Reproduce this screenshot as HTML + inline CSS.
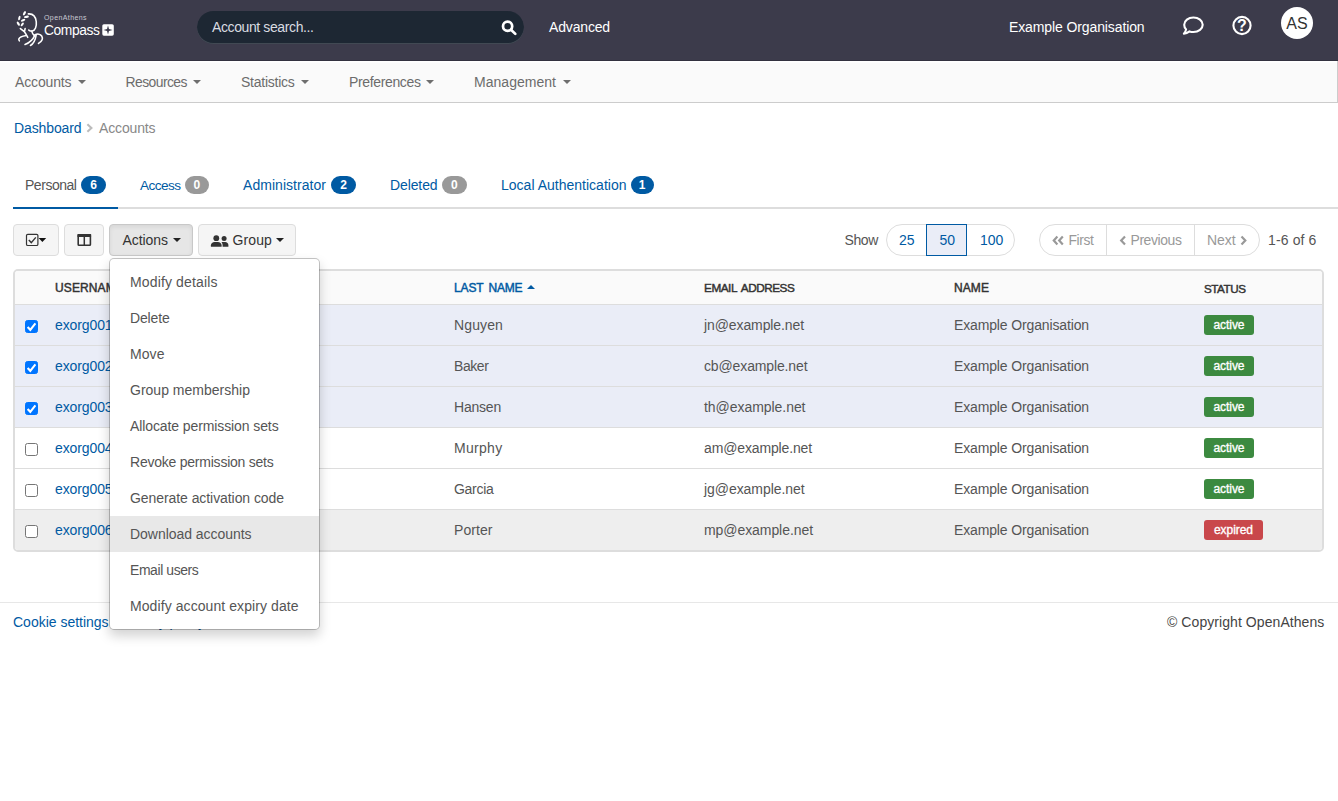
<!DOCTYPE html>
<html lang="en">
<head>
<meta charset="utf-8">
<title>Accounts - OpenAthens Compass</title>
<style>
*{box-sizing:border-box;margin:0;padding:0}
html,body{width:1338px;height:801px;overflow:hidden;background:#fff}
body{font-family:"Liberation Sans",sans-serif;font-size:14px;color:#555;position:relative}
a{color:#005aa3;text-decoration:none}
.abs{position:absolute;white-space:nowrap}
svg{display:block}

/* top header */
#hdr{position:absolute;left:0;top:0;width:1338px;height:61px;background:#3c3b4b;border-bottom:1px solid #32313f}
#search{position:absolute;left:197px;top:11px;width:327px;height:33px;border-radius:16.5px;background:#1d2733;box-shadow:inset 0 -1px 0 rgba(255,255,255,.16)}
#search span.ph{position:absolute;left:15px;top:8px;color:#d9dce1;font-size:14px;line-height:16px;white-space:nowrap}
.hw{color:#fff;font-size:14px;line-height:20px}
#avatar{position:absolute;left:1281px;top:7px;width:32px;height:32px;border-radius:50%;background:#fff;color:#333;text-align:center;font-size:16px;line-height:33px}

/* nav */
#nav{position:absolute;left:0;top:61px;width:1338px;height:42px;background:#fafafa;border-bottom:1px solid #ccc;border-right:1px solid #ccc;box-shadow:inset 0 1px 0 #fff,inset 0 2px 0 rgba(255,255,255,.6)}
.nv{position:absolute;top:11px;color:#6c6c6c;font-size:14px;line-height:20px;white-space:nowrap}
.caret{position:absolute;width:0;height:0;border-left:4px solid transparent;border-right:4px solid transparent;border-top:4.5px solid #6e6e6e}

/* tabs */
#tabline{position:absolute;left:13px;top:207px;width:1325px;height:2px;background:#ddd}
#tabactive{position:absolute;left:13px;top:207px;width:105px;height:2px;background:#005aa3}
.tab{position:absolute;top:175px;font-size:14px;line-height:20px;white-space:nowrap}
.bdg{position:absolute;top:176px;height:18px;border-radius:9px;font-size:12px;font-weight:bold;line-height:19px;color:#fff;text-align:center}
.bdg.b{background:#005aa3}.bdg.g{background:#999}

/* buttons */
.btn{position:absolute;top:224px;height:32px;border:1px solid #ddd;border-radius:4px;background:#f5f5f5;color:#333;font-size:14px;line-height:30px;white-space:nowrap}
.btn.on{background:#e6e6e6;border-color:#c8c8c8;box-shadow:inset 0 2px 4px rgba(0,0,0,.07)}
.btn .x{position:absolute;top:0}
.btn .caret{border-top-color:#222;top:13px}
.lbl{position:absolute;font-size:14px;line-height:20px;white-space:nowrap;color:#555}

/* pager pills */
.pill{position:absolute;top:224px;height:32px;border:1px solid #ddd;border-radius:16px;background:#fff}
.pill .c{position:absolute;top:-1px;height:32px;font-size:14px;line-height:32px;white-space:nowrap}
.pill .x{position:absolute;top:-1px;line-height:32px}
.pill .sep{position:absolute;top:0;width:1px;height:30px;background:#ddd}

/* table */
#tbl{position:absolute;left:13px;top:269px;width:1311px;height:283px;border:2px solid #ddd;border-radius:5px;background:#fff;overflow:hidden}
.row{position:absolute;left:0;width:1307px;height:41px;border-bottom:1px solid #ddd;background:#fff}
.row.sel{background:#eaedf7}
.row.hov{background:#eee;border-bottom:0;height:40px}
.row.head{height:34px;background:#fafafa;top:0}
.th{position:absolute;top:8px;font-size:12px;line-height:18px;font-weight:normal;-webkit-text-stroke:.45px;color:#333;white-space:nowrap}
.td{position:absolute;top:10px;font-size:14px;line-height:20px;color:#555;white-space:nowrap}
.cb{position:absolute;left:10px;top:15px;width:13px;height:13px;border:1px solid #767676;border-radius:2.5px;background:#fff}
.cb.on{background:#0075ff;border-color:#0075ff}
.cb.on svg{position:absolute;left:-1px;top:-1px}
.st{position:absolute;left:1189px;top:10px;height:20px;border-radius:3px;color:#fff;font-size:12px;font-weight:normal;-webkit-text-stroke:.35px;line-height:21px;white-space:nowrap;text-align:center}
.st.a{background:#3c8a40;width:50px}.st.e{background:#c9474b;width:59px}

/* dropdown */
#menu{position:absolute;left:109px;top:258px;width:211px;height:372px;background:#fff;background-clip:padding-box;border:1px solid rgba(0,0,0,.22);border-radius:5px;box-shadow:0 6px 12px rgba(0,0,0,.175);padding:5px 0}
#menu div{height:36px;line-height:36px;padding-left:20px;font-size:14px;color:#555;white-space:nowrap}
#menu div.hi{background:#e8e8e8}

/* footer */
#fline{position:absolute;left:0;top:602px;width:1338px;height:1px;background:#e7e7e7}
</style>
</head>
<body>
<div id="hdr">
  <svg class="abs" style="left:12px;top:8px" width="40" height="42" viewBox="0 0 763 801" fill="none" stroke="#fff" stroke-width="30" stroke-linecap="round" stroke-linejoin="round">
    <path d="M312 112 C400 105 452 170 463 262 C473 352 440 428 388 440 C362 442 337 433 320 420"/>
    <path d="M378 446 C386 480 398 500 418 516"/>
    <path d="M160 392 L222 440 M250 392 L238 452 M226 440 C250 470 272 510 300 560"/>
    <path d="M272 524 C200 536 142 556 130 590 C127 606 133 618 140 626"/>
    <path d="M248 694 C322 668 402 600 440 512"/>
    <path d="M352 714 C402 690 442 622 460 522"/>
    <path d="M442 510 C482 490 540 496 570 540 C596 586 560 640 506 676"/>
    <g fill="#fff" stroke="none">
      <ellipse cx="237" cy="100" rx="45" ry="22" transform="rotate(-62 237 100)"/>
      <ellipse cx="276" cy="168" rx="47" ry="22" transform="rotate(-8 276 168)"/>
      <ellipse cx="140" cy="190" rx="45" ry="20" transform="rotate(-75 140 190)"/>
      <ellipse cx="212" cy="234" rx="45" ry="20" transform="rotate(-24 212 234)"/>
      <ellipse cx="120" cy="300" rx="45" ry="22" transform="rotate(58 120 300)"/>
      <ellipse cx="196" cy="314" rx="41" ry="20" transform="rotate(-52 196 314)"/>
    </g>
  </svg>
  <div class="abs" style="left:44px;top:13px;font-size:7px;line-height:9px;color:#c9c9d2"><span style="letter-spacing:0.41px">OpenAthens</span></div>
  <div class="abs" style="left:44px;top:22px;font-size:14px;line-height:16px;color:#fff"><span style="font-size:13.8px;letter-spacing:-0.4px">Compass</span></div>
  <svg class="abs" style="left:102px;top:24px" width="12" height="12" viewBox="0 0 12 12"><rect x=".3" y=".2" width="11.5" height="11.5" rx="1.6" fill="#fff"/><path d="M6 1.4 L7 5 L10.6 6 L7 7 L6 10.6 L5 7 L1.4 6 L5 5 Z" fill="#3c3b4b"/></svg>
  <div id="search"><span class="ph"><span style="letter-spacing:-0.39px">Account search...</span></span></div>
  <div class="abs hw" style="left:549px;top:17px"><span style="letter-spacing:-0.16px">Advanced</span></div>
  <div class="abs hw" style="left:1009px;top:17px"><span style="letter-spacing:-0.11px">Example Organisation</span></div>
  <svg class="abs" style="left:498px;top:17px" width="22" height="20" viewBox="498 17 22 20" fill="none" stroke="#fff" stroke-width="2.7"><circle cx="507.6" cy="26.2" r="4.6"/><path d="M511 29.7 L515.3 33.9" stroke-linecap="round"/></svg>
  <svg class="abs" style="left:1180px;top:14px" width="26" height="23" viewBox="1180 14 26 23" fill="none" stroke="#fff" stroke-width="2.1" stroke-linejoin="round"><path d="M1193.4 17.5 C1198.6 17.5 1202.7 20.8 1202.7 24.8 C1202.7 28.8 1198.6 32 1193.4 32 C1192 32 1190.7 31.8 1189.5 31.4 C1188 32.6 1186 33.6 1183.9 33.7 C1185 32.4 1185.8 31 1186.1 29.4 C1184.9 28.1 1184.2 26.5 1184.2 24.8 C1184.2 20.8 1188.3 17.5 1193.4 17.5 Z"/></svg>
  <svg class="abs" style="left:1230px;top:14px" width="24" height="24" viewBox="1230 14 24 24"><circle cx="1242" cy="25.5" r="8.6" fill="none" stroke="#fff" stroke-width="2.1"/><text x="1242" y="31.2" text-anchor="middle" font-family="Liberation Sans, sans-serif" font-weight="bold" font-size="16" fill="#fff">?</text></svg>
  <div id="avatar">AS</div>
</div>

<div id="nav">
  <div class="nv" style="left:15px"><span style="letter-spacing:-0.14px">Accounts</span></div><i class="caret" style="left:78px;top:19px"></i>
  <div class="nv" style="left:125.5px"><span style="font-size:13.9px;letter-spacing:-0.55px">Resources</span></div><i class="caret" style="left:193px;top:19px"></i>
  <div class="nv" style="left:241px"><span style="letter-spacing:-0.25px">Statistics</span></div><i class="caret" style="left:300.5px;top:19px"></i>
  <div class="nv" style="left:349px"><span style="letter-spacing:-0.36px">Preferences</span></div><i class="caret" style="left:426px;top:19px"></i>
  <div class="nv" style="left:474px"><span style="letter-spacing:0.03px">Management</span></div><i class="caret" style="left:562.5px;top:19px"></i>
</div>

<div class="lbl" style="left:14px;top:118px"><a><span style="letter-spacing:-0.11px">Dashboard</span></a></div>
<svg class="abs" style="left:86px;top:123px" width="8" height="10" viewBox="0 0 8 10"><path d="M1.4 1.3 L5.4 5 L1.4 8.7" fill="none" stroke="#bcbcbc" stroke-width="2.1"/></svg>
<div class="lbl" style="left:99px;top:118px;color:#888"><span style="letter-spacing:-0.14px">Accounts</span></div>

<div id="tabline"></div>
<div id="tabactive"></div>
<div class="tab" style="left:25px;color:#555"><span style="letter-spacing:-0.47px">Personal</span></div><span class="bdg b" style="left:81px;width:25px">6</span>
<div class="tab" style="left:140px;color:#555"><a><span style="font-size:13.59px;letter-spacing:-0.55px">Access</span></a></div><span class="bdg g" style="left:185px;width:23.5px">0</span>
<div class="tab" style="left:243px;color:#555"><a><span style="letter-spacing:0.04px">Administrator</span></a></div><span class="bdg b" style="left:331px;width:25px">2</span>
<div class="tab" style="left:390px;color:#555"><a><span style="letter-spacing:-0.11px">Deleted</span></a></div><span class="bdg g" style="left:442px;width:24.5px">0</span>
<div class="tab" style="left:501px;color:#555"><a><span style="letter-spacing:0.01px">Local Authentication</span></a></div><span class="bdg b" style="left:630.5px;width:23px">1</span>

<div class="btn" style="left:13px;width:46px"><svg class="abs" style="left:11px;top:8px" width="24" height="15" viewBox="25 233 24 15"><rect x="26.5" y="234.3" width="11.4" height="11.2" rx="1.3" fill="none" stroke="#333" stroke-width="1.2"/><path d="M28.8 240 L31.3 242.6 L35.8 237.4" fill="none" stroke="#333" stroke-width="1.4"/><path d="M38.6 238 L46.2 238 L42.4 242 Z" fill="#111"/></svg></div>
<div class="btn" style="left:64px;width:40px"><svg class="abs" style="left:12px;top:8px" width="16" height="15" viewBox="77 233 16 15"><rect x="78.2" y="234.7" width="12.2" height="10.5" rx=".8" fill="none" stroke="#333" stroke-width="1.6"/><rect x="77.5" y="234" width="13.6" height="3" rx=".6" fill="#333"/><path d="M84.3 236 L84.3 245.5" stroke="#333" stroke-width="1.5"/></svg></div>
<div class="btn on" style="left:109px;width:84px"><span class="x" style="left:12.5px"><span style="letter-spacing:-0.06px">Actions</span></span><i class="caret" style="left:63px"></i></div>
<div class="btn" style="left:198px;width:98px"><svg class="abs" style="left:11px;top:9px" width="20" height="14" viewBox="210 233 20 14" fill="#333"><circle cx="216.3" cy="237.2" r="2.9"/><path d="M210.9 245.8 L210.9 244.2 C210.9 242.2 212.6 240.9 214.6 240.9 L217.9 240.9 C219.9 240.9 221.6 242.2 221.6 244.2 L221.6 245.8 Z"/><circle cx="224.1" cy="237.6" r="2.5"/><path d="M222.6 245.8 L222.6 244 C222.6 242.9 222.2 241.9 221.5 241.2 C221.9 241 222.4 240.9 222.9 240.9 L225.2 240.9 C227 240.9 228.4 242.2 228.4 244 L228.4 245.8 Z"/></svg><span class="x" style="left:33.5px"><span style="letter-spacing:0.12px">Group</span></span><i class="caret" style="left:77px"></i></div>
<div class="lbl" style="left:844.5px;top:230px"><span style="letter-spacing:-0.38px">Show</span></div>
<div class="pill" style="left:886px;width:129px"><span class="c" style="left:39px;width:41px;background:#eaedf7;border:1px solid #005aa3"></span><a class="x" style="left:12px">25</a><a class="x" style="left:52.5px">50</a><a class="x" style="left:93px">100</a></div>
<div class="pill" style="left:1039px;width:221px;color:#999"><i class="sep" style="left:66px"></i><i class="sep" style="left:154px"></i><svg class="abs" style="left:12px;top:10px" width="13" height="11" viewBox="1052 234 13 11" fill="none" stroke="#999" stroke-width="2.2"><path d="M1057.4 235.6 L1053.8 239.5 L1057.4 243.4 M1062.8 235.6 L1059.2 239.5 L1062.8 243.4"/></svg><svg class="abs" style="left:79px;top:10px" width="9" height="11" viewBox="1119 234 9 11" fill="none" stroke="#999" stroke-width="2.2"><path d="M1125 235.6 L1121.2 239.5 L1125 243.4"/></svg><svg class="abs" style="left:200px;top:10px" width="9" height="11" viewBox="1240 234 9 11" fill="none" stroke="#999" stroke-width="2.2"><path d="M1241.5 235.6 L1245.3 239.5 L1241.5 243.4"/></svg><span class="x" style="left:28.5px"><span style="font-size:13.89px;letter-spacing:-0.4px">First</span></span><span class="x" style="left:90.5px"><span style="font-size:13.93px;letter-spacing:-0.4px">Previous</span></span><span class="x" style="left:167px"><span style="letter-spacing:-0.07px">Next</span></span></div>
<div class="lbl" style="left:1268px;top:230px"><span style="letter-spacing:0.13px">1-6 of 6</span></div>

<div id="tbl">
  <div class="row head"><div class="th" style="left:40px"><span style="letter-spacing:0.12px">USERNAME</span></div><div class="th" style="left:439px;color:#005aa3"><span style="word-spacing:2px;letter-spacing:-0.15px">LAST NAME</span></div><div class="th" style="left:689px"><span style="word-spacing:2px;font-size:11.76px;letter-spacing:-0.45px">EMAIL ADDRESS</span></div><div class="th" style="left:939px"><span style="letter-spacing:0.08px">NAME</span></div><div class="th" style="left:1189px;top:9px"><span style="font-size:11.64px;letter-spacing:-0.45px">STATUS</span></div><i class="abs" style="left:512px;top:14px;width:0;height:0;border-left:4px solid transparent;border-right:4px solid transparent;border-bottom:4.5px solid #005aa3"></i></div>
  <div class="row sel" style="top:34px"><i class="cb on"><svg width="13" height="13" viewBox="0 0 13 13"><path d="M2.6 7 L5.3 9.8 L10.4 3.4" fill="none" stroke="#fff" stroke-width="2.1"/></svg></i><div class="td" style="left:40px"><a><span style="letter-spacing:-0.11px">exorg001</span></a></div><div class="td" style="left:439px"><span style="letter-spacing:0.12px">Nguyen</span></div><div class="td" style="left:689px"><span style="letter-spacing:-0.1px">jn@example.net</span></div><div class="td" style="left:939px"><span style="letter-spacing:-0.14px">Example Organisation</span></div><div class="st a"><span style="letter-spacing:-0.06px">active</span></div></div>
  <div class="row sel" style="top:75px"><i class="cb on"><svg width="13" height="13" viewBox="0 0 13 13"><path d="M2.6 7 L5.3 9.8 L10.4 3.4" fill="none" stroke="#fff" stroke-width="2.1"/></svg></i><div class="td" style="left:40px"><a><span style="letter-spacing:-0.11px">exorg002</span></a></div><div class="td" style="left:439px"><span style="font-size:13.97px;letter-spacing:-0.4px">Baker</span></div><div class="td" style="left:689px"><span style="letter-spacing:-0.13px">cb@example.net</span></div><div class="td" style="left:939px"><span style="letter-spacing:-0.14px">Example Organisation</span></div><div class="st a"><span style="letter-spacing:-0.06px">active</span></div></div>
  <div class="row sel" style="top:116px"><i class="cb on"><svg width="13" height="13" viewBox="0 0 13 13"><path d="M2.6 7 L5.3 9.8 L10.4 3.4" fill="none" stroke="#fff" stroke-width="2.1"/></svg></i><div class="td" style="left:40px"><a><span style="letter-spacing:-0.11px">exorg003</span></a></div><div class="td" style="left:439px"><span style="letter-spacing:-0.21px">Hansen</span></div><div class="td" style="left:689px"><span style="letter-spacing:-0.05px">th@example.net</span></div><div class="td" style="left:939px"><span style="letter-spacing:-0.14px">Example Organisation</span></div><div class="st a"><span style="letter-spacing:-0.06px">active</span></div></div>
  <div class="row " style="top:157px"><i class="cb"></i><div class="td" style="left:40px"><a><span style="letter-spacing:-0.11px">exorg004</span></a></div><div class="td" style="left:439px"><span style="letter-spacing:0.3px">Murphy</span></div><div class="td" style="left:689px"><span style="letter-spacing:-0.14px">am@example.net</span></div><div class="td" style="left:939px"><span style="letter-spacing:-0.14px">Example Organisation</span></div><div class="st a"><span style="letter-spacing:-0.06px">active</span></div></div>
  <div class="row " style="top:198px"><i class="cb"></i><div class="td" style="left:40px"><a><span style="letter-spacing:-0.11px">exorg005</span></a></div><div class="td" style="left:439px"><span style="letter-spacing:-0.29px">Garcia</span></div><div class="td" style="left:689px"><span style="letter-spacing:-0.06px">jg@example.net</span></div><div class="td" style="left:939px"><span style="letter-spacing:-0.14px">Example Organisation</span></div><div class="st a"><span style="letter-spacing:-0.06px">active</span></div></div>
  <div class="row hov" style="top:239px"><i class="cb"></i><div class="td" style="left:40px"><a><span style="letter-spacing:-0.11px">exorg006</span></a></div><div class="td" style="left:439px"><span style="letter-spacing:0.06px">Porter</span></div><div class="td" style="left:689px"><span style="letter-spacing:-0.07px">mp@example.net</span></div><div class="td" style="left:939px"><span style="letter-spacing:-0.14px">Example Organisation</span></div><div class="st e"><span style="letter-spacing:-0.05px">expired</span></div></div>
</div>

<div id="fline"></div>
<div class="lbl" style="left:13px;top:612px"><a><span style="letter-spacing:-0.01px">Cookie settings</span></a> <a style="margin-left:7.6px"><span style="letter-spacing:-0.04px">Privacy policy</span></a></div>
<div class="lbl" style="left:1167px;top:612px;color:#444"><span style="letter-spacing:0.07px">© Copyright OpenAthens</span></div>

<div id="menu">
  <div><span style="letter-spacing:0.14px">Modify details</span></div>
  <div><span style="letter-spacing:-0.16px">Delete</span></div>
  <div><span style="letter-spacing:0.07px">Move</span></div>
  <div><span style="letter-spacing:0.01px">Group membership</span></div>
  <div><span style="letter-spacing:-0.1px">Allocate permission sets</span></div>
  <div><span style="letter-spacing:-0.23px">Revoke permission sets</span></div>
  <div><span style="letter-spacing:-0.07px">Generate activation code</span></div>
  <div class="hi"><span style="letter-spacing:-0.04px">Download accounts</span></div>
  <div><span style="font-size:13.95px;letter-spacing:-0.4px">Email users</span></div>
  <div><span style="letter-spacing:0.08px">Modify account expiry date</span></div>
</div>

</body>
</html>
